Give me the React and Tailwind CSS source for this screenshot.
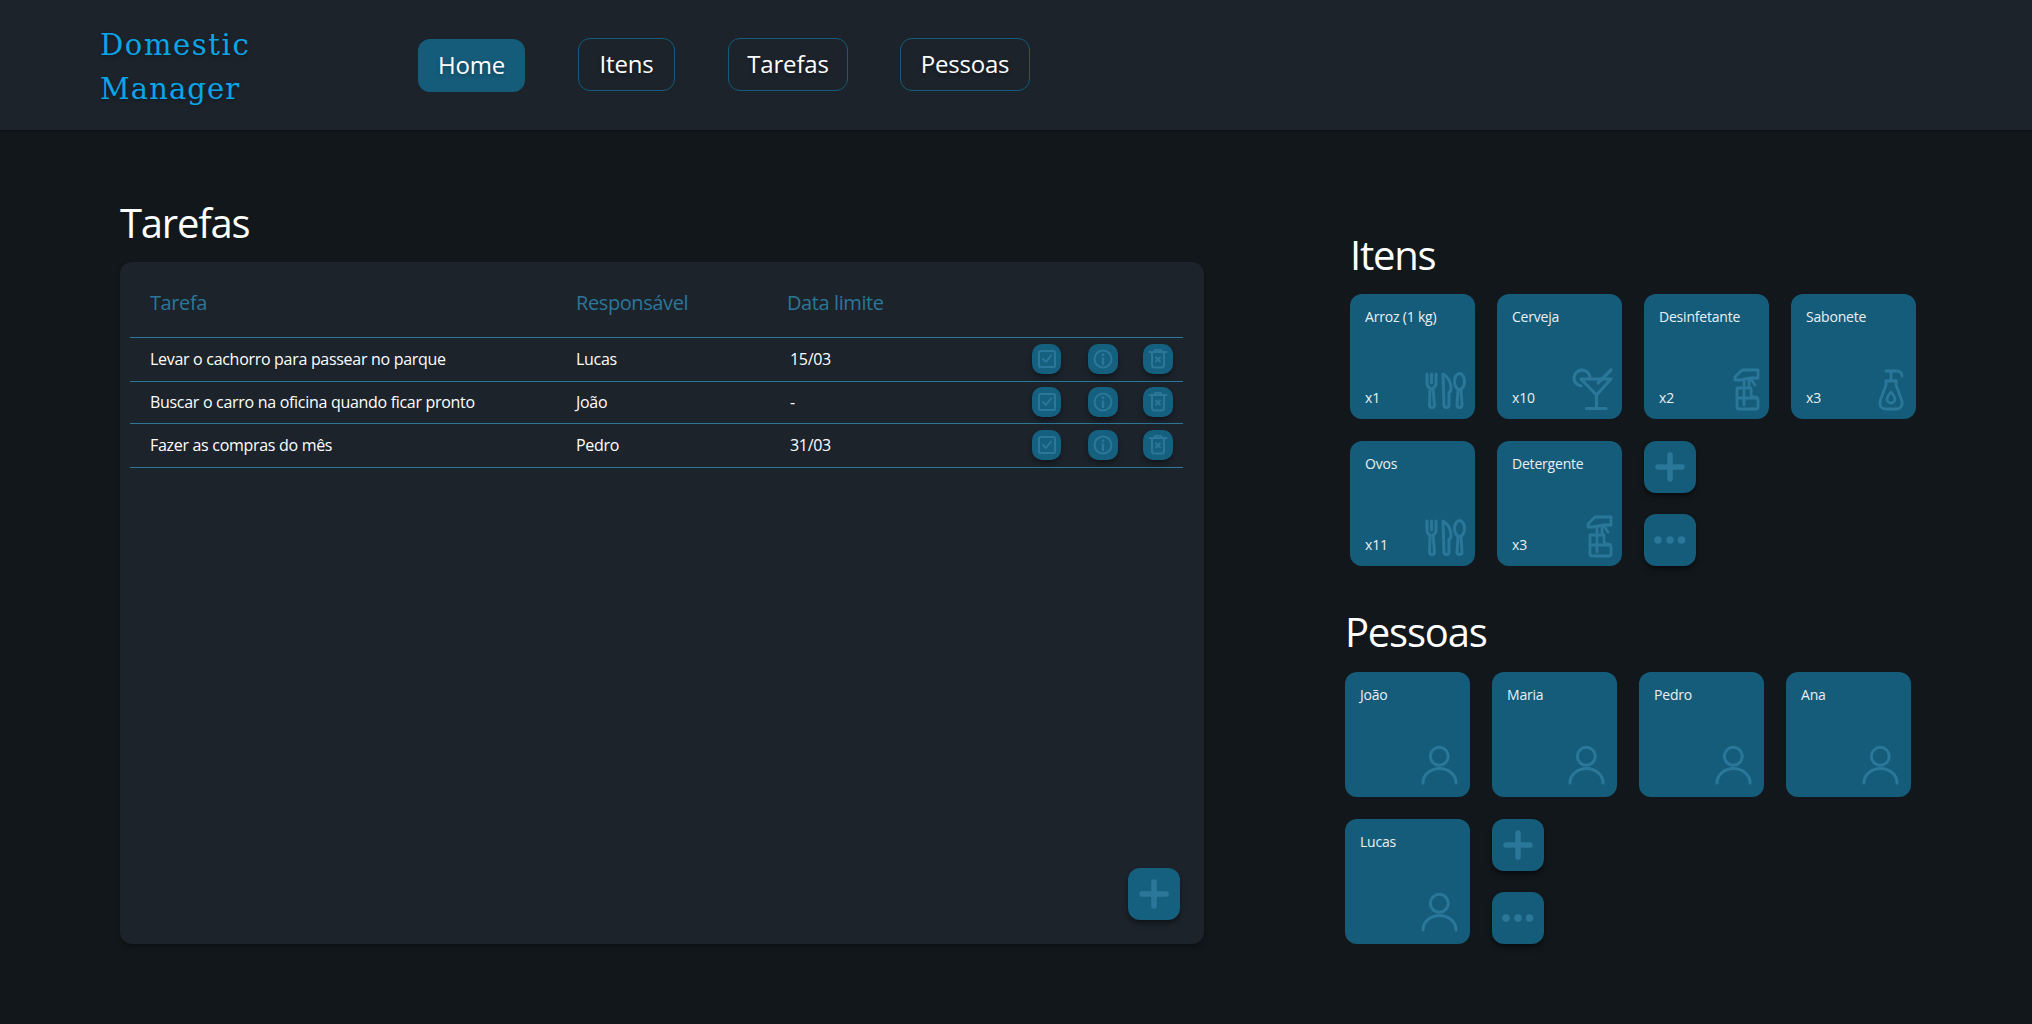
const tasks = [
  { name: 'Levar o cachorro para passear no parque', who: 'Lucas', date: '15/03', row: 'h-[44px]' },
  { name: 'Buscar o carro na oficina quando ficar pronto', who: 'João', date: '-', row: 'h-[42px]' },
  { name: 'Fazer as compras do mês', who: 'Pedro', date: '31/03', row: 'h-[44px]' },
]

const iconColor = '#2b7799'

function Cutlery() {
  return (
    <svg width="40" height="40" viewBox="0 0 40 40" fill="none" stroke={iconColor} strokeWidth="3" strokeLinecap="round" strokeLinejoin="round" className="overflow-visible">
      <path d="M2 4V12Q2 17 5 18L4.500 35a2.500 2.500 0 0 0 5 0L8 18Q11 17 11 12V4M6.500 4V13" />
      <path d="M18 4Q26 8 26 19Q26 22 24 22L24 35a2.500 2.500 0 0 1-5 0Z" />
      <ellipse cx="34.500" cy="11.500" rx="5" ry="8" />
      <path d="M33 20L32 35a2.500 2.500 0 0 0 5 0L36 20" />
    </svg>
  )
}

function Cocktail() {
  return (
    <svg width="40" height="40" viewBox="0 0 40 40" fill="none" stroke={iconColor} strokeWidth="3.200" strokeLinecap="round" strokeLinejoin="round" className="overflow-visible">
      <path d="M9 16A8 8 0 1 1 18 8" />
      <path d="M9 9H39L24.500 25ZM24.500 25V38M14.500 38.500H34" />
      <path d="M39 0L26 13" />
    </svg>
  )
}

function Spray() {
  return (
    <svg width="40" height="40" viewBox="0 0 40 40" fill="none" stroke={iconColor} strokeWidth="2.800" strokeLinecap="round" strokeLinejoin="round" className="overflow-visible">
      <path d="M23 0H39V8H32L21 10H16V7Z" />
      <path d="M32 9L36 15M25 11V17M30 11V17" />
      <path d="M18 18H32V24Q32 27 35 27Q39 27 39 30V37Q39 39 37 39H20Q18 39 18 37Z" />
      <path d="M18 28H38M25 18V35" />
    </svg>
  )
}

function Soap() {
  return (
    <svg width="40" height="40" viewBox="0 0 40 40" fill="none" stroke={iconColor} strokeWidth="2.800" strokeLinecap="round" strokeLinejoin="round" className="overflow-visible">
      <path d="M36 6Q36 1 30 1H20M25 1V10M20 11H30" />
      <path d="M20 11V15L14 31Q13 39 20 39H30Q37 39 36 31L30 15V11" />
      <path d="M25 22Q29 27 29 29A4 4 0 0 1 21 29Q21 27 25 22Z" />
    </svg>
  )
}

function Person() {
  return (
    <svg width="40" height="40" viewBox="0 0 40 40" fill="none" stroke={iconColor} strokeWidth="3" strokeLinecap="round" className="overflow-visible">
      <circle cx="19.300" cy="9.300" r="9" />
      <path d="M3 36A16.500 14.500 0 0 1 36 36" />
    </svg>
  )
}

function PlusIcon() {
  return (
    <svg width="30" height="30" viewBox="0 0 30 30" fill="none" stroke={iconColor} strokeWidth="5.500" strokeLinecap="round">
      <path d="M15 3V27M3 15H27" />
    </svg>
  )
}

function DotsIcon() {
  return (
    <svg width="32" height="10" viewBox="0 0 32 10" fill={iconColor}>
      <circle cx="4" cy="5" r="3.800" />
      <circle cx="16" cy="5" r="3.800" />
      <circle cx="27.500" cy="5" r="3.800" />
    </svg>
  )
}

function CheckIcon() {
  return (
    <svg width="20" height="20" viewBox="0 0 20 20" fill="none" stroke={iconColor} strokeWidth="2" strokeLinecap="round" strokeLinejoin="round">
      <rect x="2" y="2" width="16" height="16" rx="1.500" />
      <path d="M6 10L9 13L14 6.500" />
    </svg>
  )
}

function InfoIcon() {
  return (
    <svg width="20" height="20" viewBox="0 0 20 20" fill="none" stroke={iconColor} strokeWidth="2" strokeLinecap="round">
      <circle cx="10" cy="10" r="8.500" />
      <path d="M10 9.500V15" strokeWidth="2.400" />
      <circle cx="10" cy="5.800" r="1.300" fill={iconColor} stroke="none" />
    </svg>
  )
}

function TrashIcon() {
  return (
    <svg width="20" height="20" viewBox="0 0 20 20" fill="none" stroke={iconColor} strokeWidth="2" strokeLinecap="round" strokeLinejoin="round">
      <path d="M1.500 3H18.500M6.500 3Q6.500 0.500 9 0.500H11Q13.500 0.500 13.500 3" />
      <path d="M4 3.500V16Q4 18.500 6.500 18.500H13.500Q16 18.500 16 16V3.500" />
      <path d="M8 8.500L12 12.500M12 8.500L8 12.500" />
    </svg>
  )
}

function ActionButton({ children, className }) {
  return (
    <button className={`flex h-[30px] items-center justify-center rounded-[10px] bg-[#15607f] shadow-md shadow-black/30 ${className}`}>
      {children}
    </button>
  )
}

function SmallButton({ children, className = '' }) {
  return (
    <button className={`flex h-[52px] w-[52px] items-center justify-center rounded-xl bg-[#155c7a] shadow-md shadow-black/40 ${className}`}>
      {children}
    </button>
  )
}

function ItemCard({ name, count, icon }) {
  return (
    <div className="flex h-[125px] w-[125px] flex-col justify-between rounded-xl bg-[#155c7a] pt-[13px] pr-[10px] pb-[9px] pl-[15px] text-sm tracking-[-0.2px] text-[#e8f0f4]">
      <div>{name}</div>
      <div className="flex items-end justify-between">
        <span className="mb-[2px]">{count}</span>
        {icon}
      </div>
    </div>
  )
}

function PersonCard({ name }) {
  return (
    <div className="flex h-[125px] w-[125px] flex-col justify-between rounded-xl bg-[#155c7a] pt-[13px] pr-[10px] pb-[10px] pl-[15px] text-sm tracking-[-0.2px] text-[#e8f0f4]">
      <div>{name}</div>
      <div className="flex justify-end">
        <Person />
      </div>
    </div>
  )
}

function NavButton({ children, active, className = '' }) {
  const look = active ? 'mt-px bg-[#155c7a]' : 'border border-[#155c7a]'
  return (
    <button className={`h-[53px] rounded-xl pb-[2px] text-2xl tracking-[-0.2px] text-white [text-shadow:0_2px_4px_rgba(0,0,0,0.3)] ${look} ${className}`}>
      {children}
    </button>
  )
}

export default function App() {
  return (
    <div className="min-h-screen bg-[#12171b] font-['Open_Sans',sans-serif]">
      {/* Header */}
      <header className="flex h-[130px] items-center bg-[#1c232b] pl-[100px] shadow-sm shadow-black/20">
        <div className="w-[318px] pt-[3px] font-['DejaVu_Serif',serif] text-[29px] leading-[44px] text-[#0aa5e8] [text-shadow:0_2px_4px_rgba(0,0,0,0.3)]">
          <div className="tracking-[1.6px]">Domestic</div>
          <div className="tracking-[1.1px]">Manager</div>
        </div>
        <nav className="flex items-start gap-[53px]">
          <NavButton active className="w-[107px]">Home</NavButton>
          <NavButton className="w-[97px]">Itens</NavButton>
          <NavButton className="w-[120px]">Tarefas</NavButton>
          <NavButton className="-ml-px w-[130px]">Pessoas</NavButton>
        </nav>
      </header>

      <main className="flex pt-[63px] pl-[120px]">
        {/* Tarefas */}
        <section className="w-[1084px]">
          <h1 className="mb-[9px] text-[40px] leading-[60px] tracking-[-1.2px] text-white">Tarefas</h1>
          <div className="flex h-[682px] flex-col rounded-xl bg-[#1c232b] pt-[25px] shadow-md shadow-black/20">
            <div className="mx-[10px] mr-[21px]">
              <div className="grid h-[51px] grid-cols-[446px_212px_1fr] border-b border-[#2b7799] pb-[18px] pl-[20px] text-xl leading-[32px] tracking-[-0.4px] text-[#2b7799]">
                <div>Tarefa</div>
                <div className="-ml-[20px]">Responsável</div>
                <div className="-ml-[21px]">Data limite</div>
              </div>
              {tasks.map((t) => (
                <div key={t.name} className={`grid grid-cols-[446px_212px_1fr] items-center border-b border-[#2b7799] pb-[2px] pl-[20px] text-base tracking-[-0.3px] text-white ${t.row}`}>
                  <div>{t.name}</div>
                  <div className="-ml-[20px]">{t.who}</div>
                  <div className="flex items-center justify-between pr-[10px]">
                    <span className="-ml-[18px]">{t.date}</span>
                    <div className="flex">
                      <ActionButton className="w-[29px]"><CheckIcon /></ActionButton>
                      <ActionButton className="ml-[27px] w-[30px]"><InfoIcon /></ActionButton>
                      <ActionButton className="ml-[25px] w-[30px]"><TrashIcon /></ActionButton>
                    </div>
                  </div>
                </div>
              ))}
            </div>
            <button className="mt-auto mr-[24px] mb-[24px] flex h-[52px] w-[52px] items-center justify-center self-end rounded-xl bg-[#15607f] shadow-md shadow-black/40">
              <PlusIcon />
            </button>
          </div>
        </section>

        {/* Itens e Pessoas */}
        <aside className="ml-[141px] pt-[32px]">
          <section className="ml-[5px]">
            <h2 className="mb-[9px] text-[40px] leading-[60px] tracking-[-1.2px] text-white">Itens</h2>
            <div className="flex flex-col gap-[22px]">
              <div className="flex gap-[22px]">
                <ItemCard name="Arroz (1 kg)" count="x1" icon={<Cutlery />} />
                <ItemCard name="Cerveja" count="x10" icon={<Cocktail />} />
                <ItemCard name="Desinfetante" count="x2" icon={<Spray />} />
                <ItemCard name="Sabonete" count="x3" icon={<Soap />} />
              </div>
              <div className="flex gap-[22px]">
                <ItemCard name="Ovos" count="x11" icon={<Cutlery />} />
                <ItemCard name="Detergente" count="x3" icon={<Spray />} />
                <div className="flex flex-col gap-[21px]">
                  <SmallButton><PlusIcon /></SmallButton>
                  <SmallButton><DotsIcon /></SmallButton>
                </div>
              </div>
            </div>
          </section>
          <section className="mt-[36px]">
            <h2 className="mb-[10px] text-[40px] leading-[60px] tracking-[-1.2px] text-white">Pessoas</h2>
            <div className="flex flex-col gap-[22px]">
              <div className="flex gap-[22px]">
                <PersonCard name="João" />
                <PersonCard name="Maria" />
                <PersonCard name="Pedro" />
                <PersonCard name="Ana" />
              </div>
              <div className="flex gap-[22px]">
                <PersonCard name="Lucas" />
                <div className="flex flex-col gap-[21px]">
                  <SmallButton><PlusIcon /></SmallButton>
                  <SmallButton><DotsIcon /></SmallButton>
                </div>
              </div>
            </div>
          </section>
        </aside>
      </main>
    </div>
  )
}
